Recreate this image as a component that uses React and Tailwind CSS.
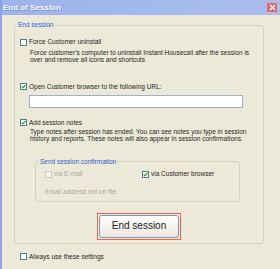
import { X } from 'lucide-react';

function Box({ checked, disabled }) {
  return (
    <span
      className={`flex h-[7px] w-[7px] shrink-0 items-center justify-center border ${
        disabled ? 'border-[#cac8bb] bg-[#f6f5f0]' : 'border-[#55779f] bg-white'
      }`}
    >
      {checked && (
        <svg width="5" height="5" viewBox="0 0 5 5">
          <path d="M0.6 2.3 L2 3.8 L4.5 0.9" fill="none" stroke="#26a326" strokeWidth="1.2" />
        </svg>
      )}
    </span>
  );
}

function Row({ checked, disabled, children, className = '' }) {
  return (
    <div className={`flex items-center gap-[2px] leading-[8px] ${className}`}>
      <Box checked={checked} disabled={disabled} />
      <span className={disabled ? 'text-[#aca899]' : 'text-[#1f1f1f]'}>{children}</span>
    </div>
  );
}

export default function App() {
  return (
    <div className="flex h-[269px] w-[280px] flex-col overflow-hidden border-l-2 border-[#8ea5e5] bg-[#ece9d8] font-['Liberation_Sans',Arial,sans-serif] text-[6.5px] text-[#1f1f1f]">
      {/* Title bar */}
      <div className="flex h-[15px] shrink-0 items-center justify-between bg-gradient-to-r from-[#9db3ea] to-[#a9bdef] pl-[1px] pr-[2px]">
        <span className="text-[8px] font-bold leading-[10px] text-[#f7f8fd] [text-shadow:1px_1px_0_#7d93cf]">
          End of Session
        </span>
        <span className="flex h-[11px] w-[12px] items-center justify-center rounded-[2px] border border-[#e5aeb8] bg-[#c8717f]">
          <X size={9} strokeWidth={3} className="text-white" />
        </span>
      </div>

      <div className="pl-[12px] pt-[6px]">
        <fieldset className="w-[250px] rounded-[3px] border border-[#d5d2c2]">
          <legend className="ml-[2px] px-[1px] leading-[8px] text-[#2c5bd6]">End session</legend>

          <div className="pl-[5px] pt-[9px]">
            <Row>Force Customer uninstall</Row>
            <div className="mt-[2.5px] pl-[10px] leading-[7px]">
              <div>Force customer's computer to uninstall Instant Housecall after the session is</div>
              <div>over and remove all icons and shortcuts</div>
            </div>

            <Row checked className="mt-[20px]">Open Customer browser to the following URL:</Row>
            <div className="ml-[9px] mt-[4px] h-[13px] w-[214px] border border-[#9fb1c8] bg-white" />

            <Row checked className="mt-[11px]">Add session notes</Row>
            <div className="mt-[1px] pl-[10px] leading-[7px]">
              <div>Type notes after session has ended. You can see notes you type in session</div>
              <div>history and reports. These notes will also appear in session confirmations.</div>
            </div>

            <fieldset className="ml-[15px] mt-[16px] w-[205px] rounded-[3px] border border-[#d5d2c2] pb-[5px]">
              <legend className="ml-[3px] px-[1px] leading-[8px] text-[#2c5bd6]">Send session confirmation</legend>
              <div className="pl-[9px] pt-[4.5px]">
                <div className="flex">
                  <Row disabled className="w-[97px]">via E-mail</Row>
                  <Row checked>via Customer browser</Row>
                </div>
                <div className="mt-[9.5px] leading-[8px] text-[#aca899]">Email address not on file</div>
              </div>
            </fieldset>
          </div>

          <div className="mt-[11px] flex justify-center pb-[3px]">
            <div className="border border-[#e8615a] p-[1px]">
              <button className="flex h-[23px] w-[80px] items-center justify-center rounded-[3px] border border-[#8598b3] bg-gradient-to-b from-white to-[#e9e7df] text-[10px] leading-none text-[#222]">
                End session
              </button>
            </div>
          </div>
        </fieldset>

        <Row className="ml-[6px] mt-[9px] text-[#333]">Always use these settings</Row>
      </div>
    </div>
  );
}
